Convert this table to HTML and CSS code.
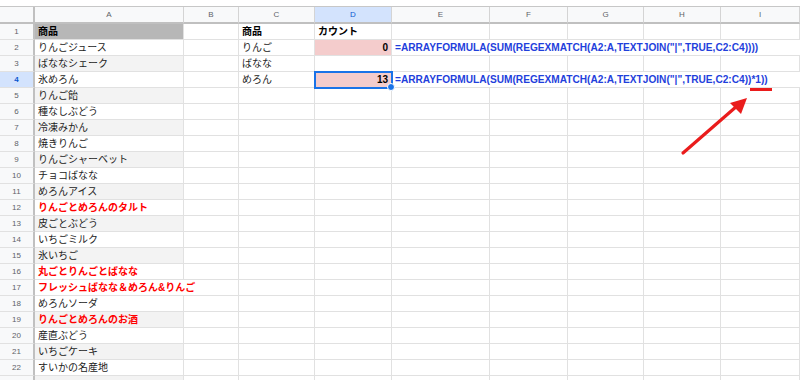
FILE: index.html
```html
<!DOCTYPE html>
<html lang="ja">
<head>
<meta charset="utf-8">
<title>Sheet</title>
<link rel="stylesheet" href="styles.css">
</head>
<body>
<div class="app">
  <div class="toolbar"></div>
  <div class="sheet">
    <div class="corner"></div>
    <div class="ch">A</div><div class="ch">B</div><div class="ch">C</div><div class="ch ch-sel">D</div><div class="ch">E</div><div class="ch">F</div><div class="ch">G</div><div class="ch">H</div><div class="ch">I</div>

    <div class="rh">1</div><div class="c hdr-a b">商品</div><div class="c"></div><div class="c b">商品</div><div class="c b">カウント</div><div class="c"></div><div class="c"></div><div class="c"></div><div class="c"></div><div class="c"></div>

    <div class="rh">2</div><div class="c">りんごジュース</div><div class="c"></div><div class="c">りんご</div><div class="c pink num">0</div><div class="c formula span5">=ARRAYFORMULA(SUM(REGEXMATCH(A2:A,TEXTJOIN("|",TRUE,C2:C4))))</div>

    <div class="rh">3</div><div class="c band">ばななシェーク</div><div class="c"></div><div class="c">ばなな</div><div class="c"></div><div class="c"></div><div class="c"></div><div class="c"></div><div class="c"></div><div class="c"></div>

    <div class="rh rh-sel">4</div><div class="c">氷めろん</div><div class="c"></div><div class="c">めろん</div><div class="c pink num sel">13</div><div class="c formula span5">=ARRAYFORMULA(SUM(REGEXMATCH(A2:A,TEXTJOIN("|",TRUE,C2:C4))*1))</div>

    <div class="rh">5</div><div class="c band">りんご飴</div><div class="c"></div><div class="c"></div><div class="c"></div><div class="c"></div><div class="c"></div><div class="c"></div><div class="c"></div><div class="c"></div>

    <div class="rh">6</div><div class="c">種なしぶどう</div><div class="c"></div><div class="c"></div><div class="c"></div><div class="c"></div><div class="c"></div><div class="c"></div><div class="c"></div><div class="c"></div>

    <div class="rh">7</div><div class="c band">冷凍みかん</div><div class="c"></div><div class="c"></div><div class="c"></div><div class="c"></div><div class="c"></div><div class="c"></div><div class="c"></div><div class="c"></div>

    <div class="rh">8</div><div class="c">焼きりんご</div><div class="c"></div><div class="c"></div><div class="c"></div><div class="c"></div><div class="c"></div><div class="c"></div><div class="c"></div><div class="c"></div>

    <div class="rh">9</div><div class="c band">りんごシャーベット</div><div class="c"></div><div class="c"></div><div class="c"></div><div class="c"></div><div class="c"></div><div class="c"></div><div class="c"></div><div class="c"></div>

    <div class="rh">10</div><div class="c">チョコばなな</div><div class="c"></div><div class="c"></div><div class="c"></div><div class="c"></div><div class="c"></div><div class="c"></div><div class="c"></div><div class="c"></div>

    <div class="rh">11</div><div class="c band">めろんアイス</div><div class="c"></div><div class="c"></div><div class="c"></div><div class="c"></div><div class="c"></div><div class="c"></div><div class="c"></div><div class="c"></div>

    <div class="rh">12</div><div class="c red">りんごとめろんのタルト</div><div class="c"></div><div class="c"></div><div class="c"></div><div class="c"></div><div class="c"></div><div class="c"></div><div class="c"></div><div class="c"></div>

    <div class="rh">13</div><div class="c band">皮ごとぶどう</div><div class="c"></div><div class="c"></div><div class="c"></div><div class="c"></div><div class="c"></div><div class="c"></div><div class="c"></div><div class="c"></div>

    <div class="rh">14</div><div class="c">いちごミルク</div><div class="c"></div><div class="c"></div><div class="c"></div><div class="c"></div><div class="c"></div><div class="c"></div><div class="c"></div><div class="c"></div>

    <div class="rh">15</div><div class="c band">氷いちご</div><div class="c"></div><div class="c"></div><div class="c"></div><div class="c"></div><div class="c"></div><div class="c"></div><div class="c"></div><div class="c"></div>

    <div class="rh">16</div><div class="c red">丸ごとりんごとばなな</div><div class="c"></div><div class="c"></div><div class="c"></div><div class="c"></div><div class="c"></div><div class="c"></div><div class="c"></div><div class="c"></div>

    <div class="rh">17</div><div class="c red span2">フレッシュばなな＆めろん&amp;りんご</div><div class="c"></div><div class="c"></div><div class="c"></div><div class="c"></div><div class="c"></div><div class="c"></div><div class="c"></div>

    <div class="rh">18</div><div class="c">めろんソーダ</div><div class="c"></div><div class="c"></div><div class="c"></div><div class="c"></div><div class="c"></div><div class="c"></div><div class="c"></div><div class="c"></div>

    <div class="rh">19</div><div class="c band red">りんごとめろんのお酒</div><div class="c"></div><div class="c"></div><div class="c"></div><div class="c"></div><div class="c"></div><div class="c"></div><div class="c"></div><div class="c"></div>

    <div class="rh">20</div><div class="c">産直ぶどう</div><div class="c"></div><div class="c"></div><div class="c"></div><div class="c"></div><div class="c"></div><div class="c"></div><div class="c"></div><div class="c"></div>

    <div class="rh">21</div><div class="c band">いちごケーキ</div><div class="c"></div><div class="c"></div><div class="c"></div><div class="c"></div><div class="c"></div><div class="c"></div><div class="c"></div><div class="c"></div>

    <div class="rh">22</div><div class="c">すいかの名産地</div><div class="c"></div><div class="c"></div><div class="c"></div><div class="c"></div><div class="c"></div><div class="c"></div><div class="c"></div><div class="c"></div>

    <div class="rh">23</div><div class="c band"></div><div class="c"></div><div class="c"></div><div class="c"></div><div class="c"></div><div class="c"></div><div class="c"></div><div class="c"></div><div class="c"></div>
  </div>

  <div class="underline"></div>
  <svg class="arrow" width="800" height="380" viewBox="0 0 800 380">
    <line x1="683" y1="153" x2="737" y2="106" stroke="#ea1c1c" stroke-width="3.2" stroke-linecap="round"/>
    <polygon points="747,98 730,103 741,114" fill="#ea1c1c"/>
  </svg>
</div>
</body>
</html>
```

FILE: styles.css
```css
html, body {
  margin: 0;
  padding: 0;
  background: #fff;
}

.app {
  position: relative;
  width: 800px;
  height: 380px;
  overflow: hidden;
  font-family: "Liberation Sans", "Noto Sans CJK JP", sans-serif;
  font-size: 10px;
  color: #222;
}

.toolbar {
  height: 6px;
  border-bottom: 1px solid #c7c7c7;
  background: #fff;
}

.sheet {
  display: grid;
  grid-template-columns: 35px 149px 55px 76px 77px 98px 78px 76px 77px 1fr;
  grid-template-rows: 17px;
  grid-auto-rows: 16px;
}

.corner {
  background: #f8f9fa;
  border-right: 2px solid #c0c0c0;
  border-bottom: 2px solid #c0c0c0;
  box-sizing: border-box;
}

.ch {
  box-sizing: border-box;
  background: #f8f9fa;
  border-right: 1px solid #d4d4d4;
  border-bottom: 2px solid #c0c0c0;
  color: #5f6368;
  font-size: 8px;
  line-height: 15px;
  text-align: center;
}

.ch-sel {
  background: #d3e3fd;
  color: #0b57d0;
}

.rh {
  box-sizing: border-box;
  background: #f8f9fa;
  border-right: 2px solid #c0c0c0;
  border-bottom: 1px solid #e1e1e1;
  color: #5f6368;
  font-size: 8px;
  line-height: 15px;
  text-align: center;
}

.rh-sel {
  background: #d3e3fd;
  color: #0b57d0;
  font-weight: bold;
}

.c {
  box-sizing: border-box;
  border-right: 1px solid #e1e1e1;
  border-bottom: 1px solid #e1e1e1;
  padding: 0 3px;
  line-height: 15px;
  white-space: nowrap;
  overflow: visible;
  color: #222;
}

.b {
  font-weight: bold;
  color: #000;
}

.hdr-a {
  background: #b7b7b7;
}

.band {
  background: #f3f3f3;
}

.red {
  color: #ff0000;
  font-weight: bold;
}

.pink {
  background: #f4cccc;
}

.num {
  text-align: right;
  font-weight: bold;
  color: #000;
}

.formula {
  color: #1f3fdc;
  font-weight: bold;
  font-size: 10.15px;
}

.span5 {
  grid-column: span 5;
  border-right: none;
}

.span2 {
  grid-column: span 2;
}

.sel {
  position: relative;
  outline: 2px solid #1a73e8;
  outline-offset: -1px;
  z-index: 2;
}

.sel::after {
  content: "";
  position: absolute;
  right: -4px;
  bottom: -4px;
  width: 6px;
  height: 6px;
  border-radius: 50%;
  background: #1a73e8;
  border: 1px solid #fff;
}

.underline {
  position: absolute;
  left: 750px;
  top: 88px;
  width: 22px;
  height: 3px;
  background: #ea1c1c;
}

.arrow {
  position: absolute;
  left: 0;
  top: 0;
  pointer-events: none;
}
```
